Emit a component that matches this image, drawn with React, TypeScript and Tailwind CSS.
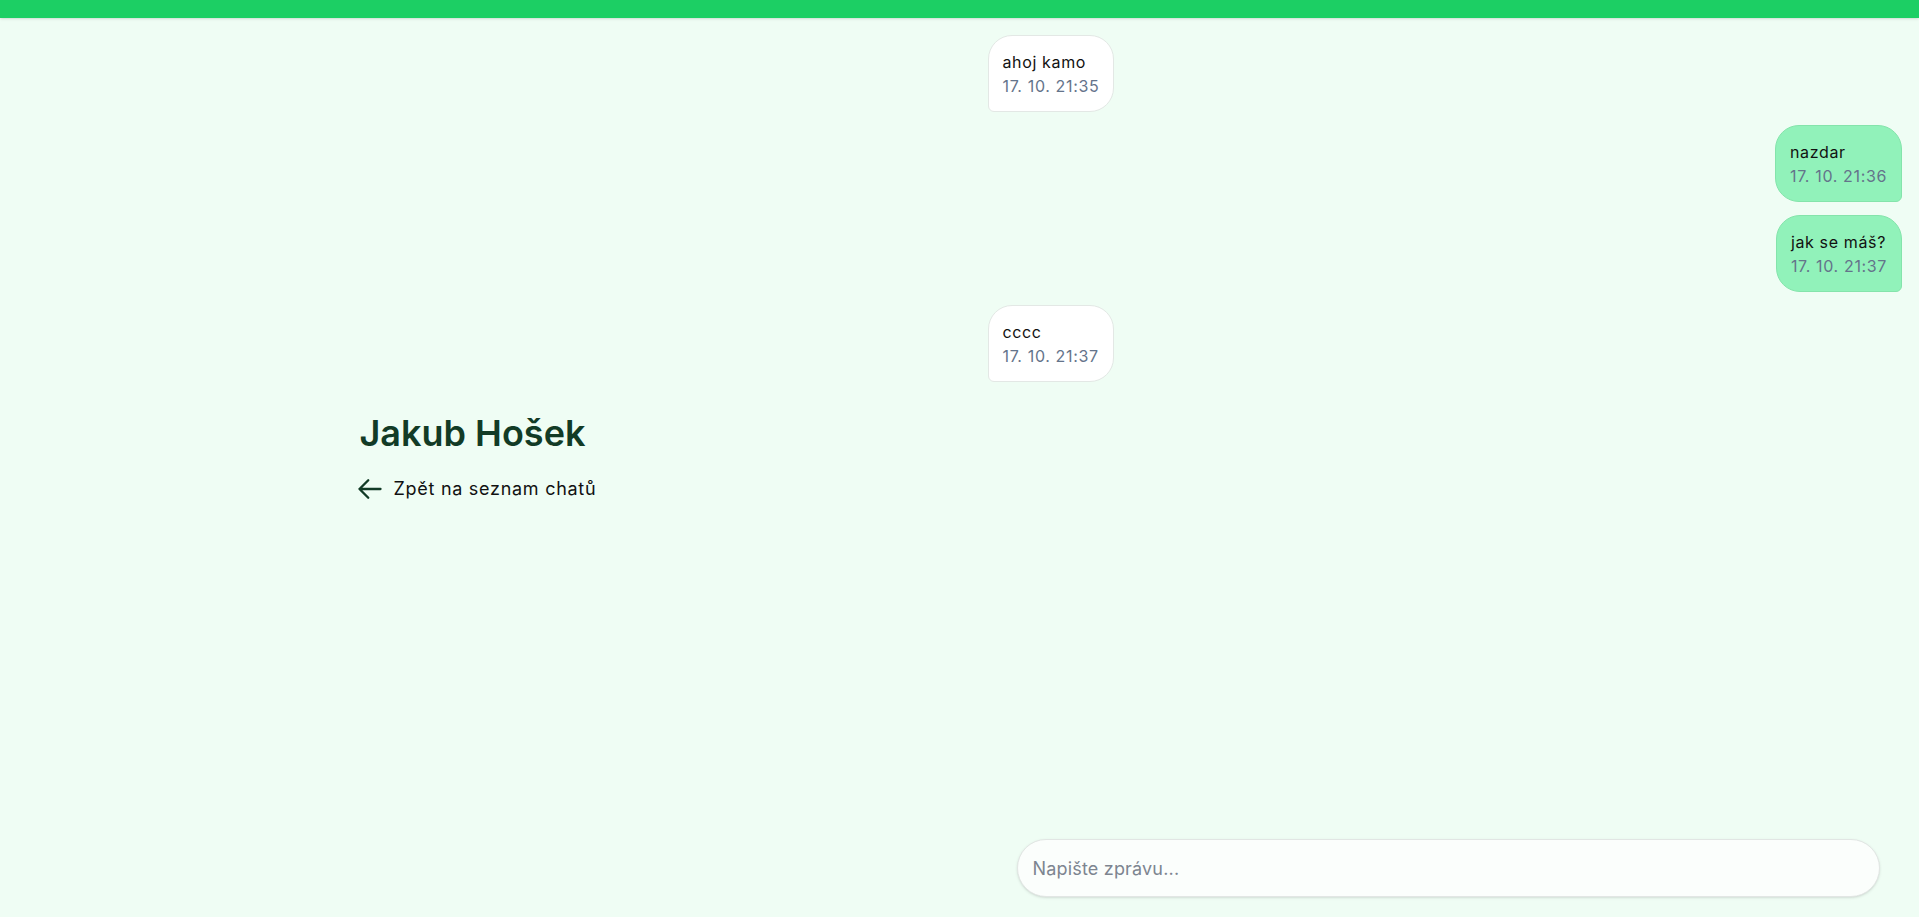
import React from "react";

type Message = {
  text: string;
  time: string;
  mine: boolean;
};

const messages: Message[] = [
  { text: "ahoj kamo", time: "17. 10. 21:35", mine: false },
  { text: "nazdar", time: "17. 10. 21:36", mine: true },
  { text: "jak se máš?", time: "17. 10. 21:37", mine: true },
  { text: "cccc", time: "17. 10. 21:37", mine: false },
];

const Bubble: React.FC<{ msg: Message }> = ({ msg }) => (
  <div className={`flex ${msg.mine ? "justify-end" : "justify-start"}`}>
    <div
      className={`px-3.5 py-[13.5px] text-base leading-6 tracking-[0.04em] ${
        msg.mine
          ? "bg-[#91f2ba] border border-[#84e4ab] rounded-3xl rounded-br-md"
          : "bg-white border border-[#e3e8e5] rounded-3xl rounded-bl-md"
      }`}
    >
      <p className="text-[#111]">{msg.text}</p>
      <p className="text-[#64748b]">{msg.time}</p>
    </div>
  </div>
);

export default function App() {
  return (
    <div
      className="h-screen flex flex-col bg-[#effdf4]"
      style={{ fontFamily: "Inter, 'Noto Sans', sans-serif" }}
    >
      <div className="h-[18px] shrink-0 bg-[#1ccf64] shadow-sm" />

      {/* Messages */}
      <div className="grid grid-cols-2">
        <div />
        <div className="pl-7 pr-[17px] pt-[17px] flex flex-col gap-[13px]">
          {messages.map((m, i) => (
            <Bubble key={i} msg={m} />
          ))}
        </div>
      </div>

      {/* Header */}
      <div className="w-full max-w-7xl mx-auto px-10 mt-[31px]">
        <h1 className="text-4xl font-semibold text-[#123b26]">Jakub Hošek</h1>
        <a
          href="#"
          className="mt-[22px] flex items-center gap-2.5 text-lg tracking-[0.04em] text-[#111]"
        >
          <svg
            className="w-7 h-7 -ml-1 text-[#123b26]"
            viewBox="0 0 24 24"
            fill="none"
            stroke="currentColor"
            strokeWidth={2}
          >
            <path
              strokeLinecap="round"
              strokeLinejoin="round"
              d="M10.5 19.5 3 12m0 0 7.5-7.5M3 12h18"
            />
          </svg>
          Zpět na seznam chatů
        </a>
      </div>

      <div className="flex-1" />

      {/* Input */}
      <div className="grid grid-cols-2 pb-5">
        <div />
        <div className="pl-[57px] pr-[39px]">
          <input
            type="text"
            placeholder="Napište zprávu..."
            className="w-full h-[58px] rounded-full border border-[#e2e6e4] bg-[#fbfefc] px-[15px] text-lg tracking-[0.01em] text-[#111] placeholder:text-[#7d8590] outline-none shadow-sm"
          />
        </div>
      </div>
    </div>
  );
}
